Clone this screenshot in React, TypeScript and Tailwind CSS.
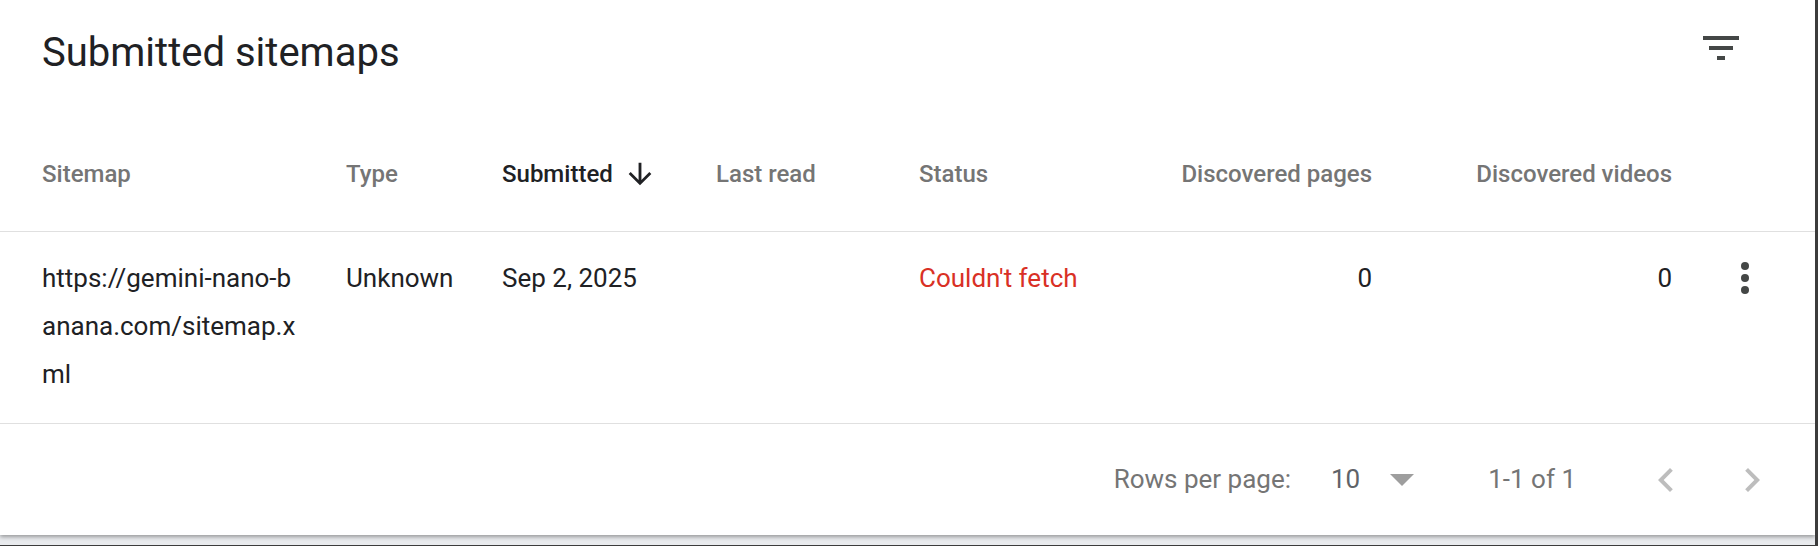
import React from "react";

const columns = [
  { key: "sitemap", label: "Sitemap", align: "left" },
  { key: "type", label: "Type", align: "left" },
  { key: "submitted", label: "Submitted", align: "left", sorted: true },
  { key: "lastRead", label: "Last read", align: "left" },
  { key: "status", label: "Status", align: "left" },
  { key: "pages", label: "Discovered pages", align: "right" },
  { key: "videos", label: "Discovered videos", align: "right" },
];

const rows = [
  {
    sitemap: "https://gemini-nano-banana.com/sitemap.xml",
    type: "Unknown",
    submitted: "Sep 2, 2025",
    lastRead: "",
    status: "Couldn't fetch",
    pages: "0",
    videos: "0",
  },
];

const grid =
  "grid grid-cols-[304px_156px_214px_203px_231px_222px_300px_1fr] pl-[42px]";

const FilterIcon = () => (
  <svg viewBox="0 0 24 24" className="h-12 w-12 fill-[#444746]">
    <path d="M10 18h4v-2h-4v2zM3 6v2h18V6H3zm3 7h12v-2H6v2z" />
  </svg>
);

const MoreIcon = () => (
  <svg viewBox="0 0 24 24" className="h-12 w-12 fill-[#444746]">
    <circle cx="12" cy="6" r="2" />
    <circle cx="12" cy="12" r="2" />
    <circle cx="12" cy="18" r="2" />
  </svg>
);

const ArrowDown = () => (
  <svg viewBox="0 0 24 24" className="h-[34px] w-[34px] fill-[#202124]">
    <path d="M20 12l-1.41-1.41L13 16.17V4h-2v12.17l-5.58-5.59L4 12l8 8 8-8z" />
  </svg>
);

const Chevron = ({ dir }: { dir: "left" | "right" }) => (
  <svg viewBox="0 0 24 24" className="h-12 w-12 fill-[#bdbdbd]">
    {dir === "left" ? (
      <path d="M15.41 7.41L14 6l-6 6 6 6 1.41-1.41L10.83 12z" />
    ) : (
      <path d="M10 6L8.59 7.41 13.17 12l-4.58 4.59L10 18l6-6z" />
    )}
  </svg>
);

export default function App() {
  return (
    <div className="h-[546px] w-full overflow-hidden bg-[#e9ebee] border-r-[3px] border-b border-[#3c3c3c] font-['Roboto',sans-serif]">
      <div className="h-[535px] bg-white shadow-[0_2px_4px_rgba(0,0,0,0.35)]">
        {/* Title */}
        <div className="flex h-[116px] items-start justify-between pl-[42px] pr-[70px]">
          <h1 className="pt-[29px] text-[40px] leading-[48px] text-[#202124]">
            Submitted sitemaps
          </h1>
          <button className="mt-6">
            <FilterIcon />
          </button>
        </div>

        {/* Header */}
        <div className={`${grid} h-[116px] items-center border-b border-[#e0e0e0] text-[24px] font-medium`}>
          {columns.map((c) => (
            <div
              key={c.key}
              className={`flex items-center gap-[10px] ${c.align === "right" ? "justify-end" : ""} ${c.sorted ? "text-[#202124]" : "text-[#757575]"}`}
            >
              {c.label}
              {c.sorted && <ArrowDown />}
            </div>
          ))}
          <div />
        </div>

        {/* Rows */}
        {rows.map((r) => (
          <div
            key={r.sitemap}
            className={`${grid} border-b border-[#e0e0e0] pt-[22px] pb-[25px] text-[26px] leading-[48px] text-[#202124]`}
          >
            <div className="pr-[46px] break-all">{r.sitemap}</div>
            <div>{r.type}</div>
            <div>{r.submitted}</div>
            <div>{r.lastRead}</div>
            <div className="text-[#d93025]">{r.status}</div>
            <div className="text-right">{r.pages}</div>
            <div className="text-right">{r.videos}</div>
            <div className="flex justify-end pr-[46px]">
              <MoreIcon />
            </div>
          </div>
        ))}

        {/* Pagination */}
        <div className="flex h-[111px] items-center justify-end pr-[39px] text-[26px] text-[#757575]">
          <span>Rows per page:</span>
          <span className="ml-[40px] text-[#5f6368]">10</span>
          <svg viewBox="0 0 24 12" className="ml-[30px] h-3 w-6 fill-[#9e9e9e]">
            <path d="M0 0l12 12 12-12z" />
          </svg>
          <span className="ml-[74px]">1-1 of 1</span>
          <button className="ml-[66px]">
            <Chevron dir="left" />
          </button>
          <button className="ml-[38px]">
            <Chevron dir="right" />
          </button>
        </div>
      </div>
    </div>
  );
}
